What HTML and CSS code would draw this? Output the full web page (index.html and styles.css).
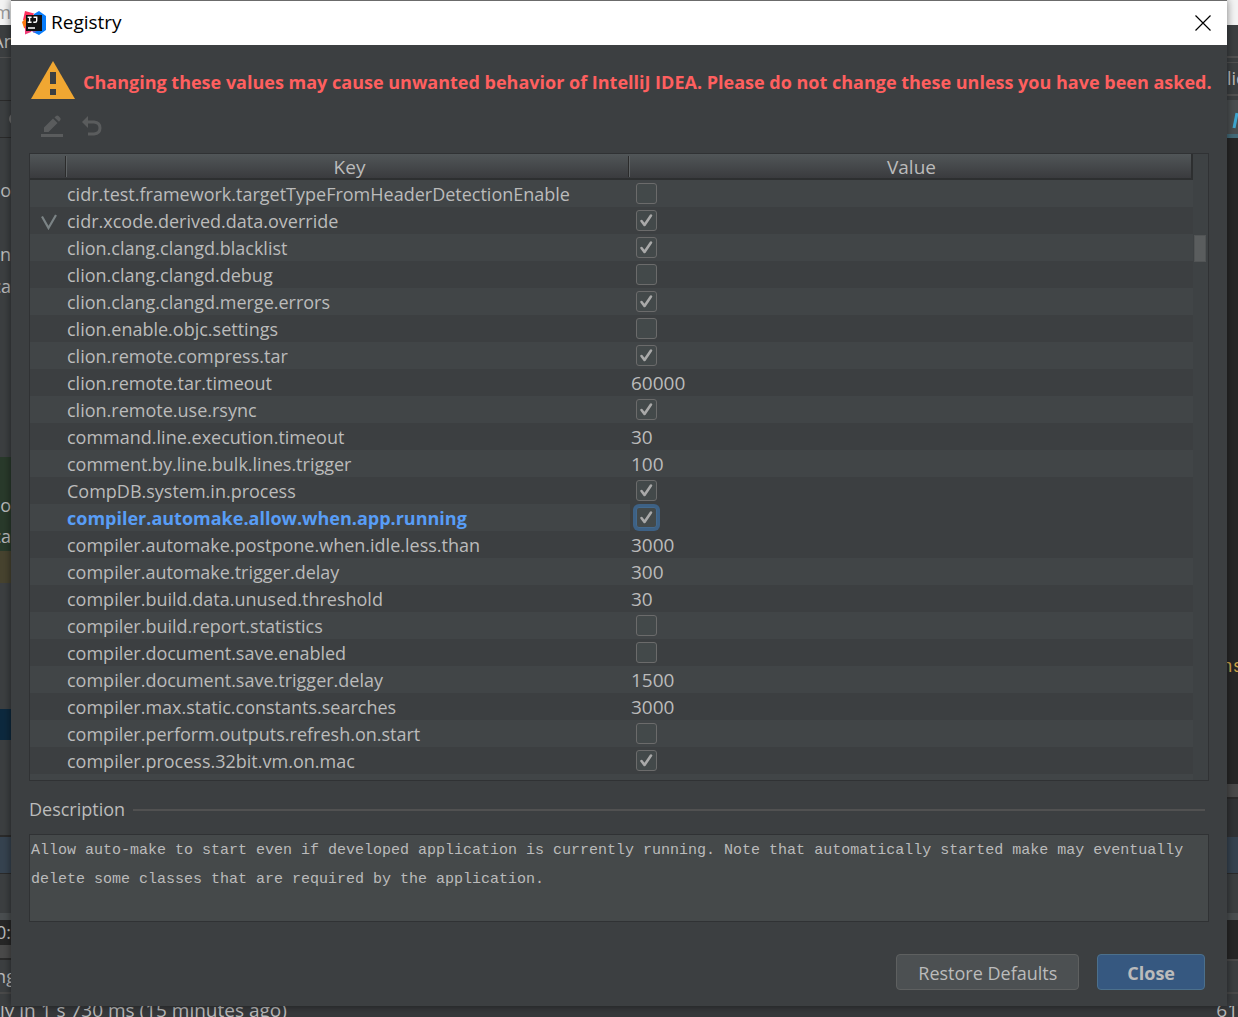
FILE: index.html
```html
<!DOCTYPE html>
<html lang="en">
<head>
<meta charset="utf-8">
<meta name="viewport" content="width=device-width, initial-scale=1">
<title>Registry</title>
<link rel="stylesheet" href="styles.css">
</head>
<body>
<div class="desktop">
  <div class="edge edge-left" aria-hidden="true">
    <div class="strip h25 paper">m</div>
    <div class="strip h32">Ar</div>
    <div class="strip h1 rule"></div>
    <div class="strip h42"></div>
    <div class="strip h1 dark"></div>
    <div class="strip h36 arc"><span class="ring"></span></div>
    <div class="strip h1 dark"></div>
    <div class="strip h36"></div>
    <div class="strip h32">o</div>
    <div class="strip h32"></div>
    <div class="strip h32">n</div>
    <div class="strip h32">ca</div>
    <div class="strip h155"></div>
    <div class="strip h32 added"></div>
    <div class="strip h32 added">o</div>
    <div class="strip h30 added">ca</div>
    <div class="strip h32 ignored"></div>
    <div class="strip h126"></div>
    <div class="strip h31 selected"></div>
    <div class="strip h95"></div>
    <div class="strip h2 dark"></div>
    <div class="strip h36 tab"></div>
    <div class="strip h1 dark"></div>
    <div class="strip h39"></div>
    <div class="strip h7 bar"></div>
    <div class="strip h25 editor">0:</div>
    <div class="strip h13 bar-gray"></div>
    <div class="strip h2 dark"></div>
    <div class="strip grow middle">ng</div>
    <div class="strip h2 bar-gray"></div>
    <div class="strip h12"></div>
  </div>

  <main class="dialog" role="dialog" aria-labelledby="dialog-title">
    <header class="titlebar">
      <svg class="logo" viewBox="0 0 24 24" aria-hidden="true">
        <path fill="#fe315d" d="M3 0l9 2.500L8 12 1 9z"/>
        <path fill="#ff7a12" d="M0 11l4-4 2 12-4-2z"/>
        <path fill="#087cfa" d="M12 3l5-3 7 5v14l-7 5-6-3z"/>
        <path fill="#f03c78" d="M3 15h10l-4 6-6 2.500z"/>
        <path fill="#7b61c8" d="M9 19h7l-4 3z"/>
        <rect x="4" y="4" width="16" height="16" fill="#111"/>
        <path fill="none" stroke="#fff" stroke-width="1.400" d="M5.600 6.200h4M7.600 6.200v5M5.600 11.200h4M11.500 6.200h3.200v3.600q0 1.500-1.600 1.500h-1.800M6 17h7"/>
      </svg>
      <h1 class="title" id="dialog-title">Registry</h1>
      <button class="close-x" type="button" aria-label="Close window">
        <svg viewBox="0 0 16 16" width="16" height="16"><path d="M.5.500l15 15M15.500.500l-15 15" stroke="#000" stroke-width="1.200" fill="none"/></svg>
      </button>
    </header>

    <div class="content">
      <div class="warning">
        <svg viewBox="0 0 44 38" width="44" height="38" aria-hidden="true"><path fill="#f0a732" d="M22 0l22 38H0z"/><path fill="#3c3f41" d="M19 11h6v12h-6zM19 28h6v6h-6z"/></svg>
        <strong class="warning-text">Changing these values may cause unwanted behavior of IntelliJ IDEA. Please do not change these unless you have been asked.</strong>
      </div>

      <div class="toolbar">
        <button class="tool" type="button" disabled aria-label="Edit">
          <svg viewBox="0 0 24 24" width="24" height="24"><path fill="#5a5c5d" d="M1 20h22v3H1zM4 18v-4.500l9-9 4.500 4.500-9 9zM14.500 3.500L16 2q1.300-1 2.500 0l1.700 1.700q1 1.200 0 2.500L19 7.800z"/></svg>
        </button>
        <button class="tool" type="button" disabled aria-label="Revert">
          <svg viewBox="0 0 24 24" width="24" height="24"><path fill="#5a5c5d" d="M2 8l6-6v12z"/><path fill="none" stroke="#5a5c5d" stroke-width="3" d="M6 8h8q6 .5 6 6t-6 6H8"/></svg>
        </button>
      </div>

      <div class="table-pane">
        <table class="registry">
          <colgroup><col class="col-mark"><col><col></colgroup>
          <thead>
            <tr><th aria-label="Changed"></th><th>Key</th><th>Value</th></tr>
          </thead>
          <tbody>
            <tr><td></td><td>cidr.test.framework.targetTypeFromHeaderDetectionEnable</td><td><input type="checkbox" aria-label="cidr.test.framework.targetTypeFromHeaderDetectionEnable"></td></tr>
            <tr><td class="mark"><svg viewBox="0 0 16 16" width="16" height="16" aria-hidden="true"><path fill="none" stroke="#7b8385" stroke-width="2.200" d="M1 2.500l6.500 11.500Q11 8 15 1"/></svg></td><td>cidr.xcode.derived.data.override</td><td><input type="checkbox" checked aria-label="cidr.xcode.derived.data.override"></td></tr>
            <tr><td></td><td>clion.clang.clangd.blacklist</td><td><input type="checkbox" checked aria-label="clion.clang.clangd.blacklist"></td></tr>
            <tr><td></td><td>clion.clang.clangd.debug</td><td><input type="checkbox" aria-label="clion.clang.clangd.debug"></td></tr>
            <tr><td></td><td>clion.clang.clangd.merge.errors</td><td><input type="checkbox" checked aria-label="clion.clang.clangd.merge.errors"></td></tr>
            <tr><td></td><td>clion.enable.objc.settings</td><td><input type="checkbox" aria-label="clion.enable.objc.settings"></td></tr>
            <tr><td></td><td>clion.remote.compress.tar</td><td><input type="checkbox" checked aria-label="clion.remote.compress.tar"></td></tr>
            <tr><td></td><td>clion.remote.tar.timeout</td><td>60000</td></tr>
            <tr><td></td><td>clion.remote.use.rsync</td><td><input type="checkbox" checked aria-label="clion.remote.use.rsync"></td></tr>
            <tr><td></td><td>command.line.execution.timeout</td><td>30</td></tr>
            <tr><td></td><td>comment.by.line.bulk.lines.trigger</td><td>100</td></tr>
            <tr><td></td><td>CompDB.system.in.process</td><td><input type="checkbox" checked aria-label="CompDB.system.in.process"></td></tr>
            <tr class="current"><td></td><td>compiler.automake.allow.when.app.running</td><td><input type="checkbox" checked aria-label="compiler.automake.allow.when.app.running"></td></tr>
            <tr><td></td><td>compiler.automake.postpone.when.idle.less.than</td><td>3000</td></tr>
            <tr><td></td><td>compiler.automake.trigger.delay</td><td>300</td></tr>
            <tr><td></td><td>compiler.build.data.unused.threshold</td><td>30</td></tr>
            <tr><td></td><td>compiler.build.report.statistics</td><td><input type="checkbox" aria-label="compiler.build.report.statistics"></td></tr>
            <tr><td></td><td>compiler.document.save.enabled</td><td><input type="checkbox" aria-label="compiler.document.save.enabled"></td></tr>
            <tr><td></td><td>compiler.document.save.trigger.delay</td><td>1500</td></tr>
            <tr><td></td><td>compiler.max.static.constants.searches</td><td>3000</td></tr>
            <tr><td></td><td>compiler.perform.outputs.refresh.on.start</td><td><input type="checkbox" aria-label="compiler.perform.outputs.refresh.on.start"></td></tr>
            <tr><td></td><td>compiler.process.32bit.vm.on.mac</td><td><input type="checkbox" checked aria-label="compiler.process.32bit.vm.on.mac"></td></tr>
          </tbody>
        </table>
        <div class="scrollbar"><div class="thumb"></div></div>
      </div>

      <div class="separator"><label for="description">Description</label><span class="line"></span></div>
      <textarea class="description" id="description" readonly>Allow auto-make to start even if developed application is currently running. Note that automatically started make may eventually delete some classes that are required by the application.</textarea>

      <footer class="actions">
        <button class="btn" type="button">Restore Defaults</button>
        <button class="btn btn-primary" type="button">Close</button>
      </footer>
    </div>
  </main>

  <div class="edge edge-right" aria-hidden="true">
    <div class="strip h25 paper"></div>
    <div class="strip h31"></div>
    <div class="strip h2 rule"></div>
    <div class="strip h4"></div>
    <div class="strip h1 rule"></div>
    <div class="strip h31">lic</div>
    <div class="strip h2 rule"></div>
    <div class="strip h4"></div>
    <div class="strip h34 bar"><svg viewBox="0 0 11 34" width="11" height="34"><path d="M10 13L7 28" stroke="#3fa6cf" stroke-width="3"/></svg></div>
    <div class="strip h4 underline"></div>
    <div class="strip h513 editor"></div>
    <div class="strip h32 editor code">ns</div>
    <div class="strip grow editor"></div>
    <div class="strip h13 bar-gray"></div>
    <div class="strip h2 dark"></div>
    <div class="strip h38 panel"></div>
    <div class="strip h36 tab"></div>
    <div class="strip h1 dark"></div>
    <div class="strip h39"></div>
    <div class="strip h7 bar"></div>
    <div class="strip h39 editor"></div>
    <div class="strip h2 bar-gray"></div>
    <div class="strip h31"></div>
    <div class="strip h2 bar-gray"></div>
    <div class="strip h12"></div>
  </div>

  <div class="status"><span>ly in 1 s 730 ms (15 minutes ago)</span><span>61</span></div>
</div>
</body>
</html>
```
FILE: styles.css
```css
* {
  box-sizing: border-box;
}

body {
  margin: 0;
  background: #3c3f41;
  color: #bbbbbb;
  font: 19px/27px "Open Sans", "Noto Sans", sans-serif;
}

button {
  margin: 0;
  padding: 0;
  border: 0;
  background: none;
  color: inherit;
  font: inherit;
}

svg {
  display: block;
  flex: none;
}

.desktop {
  display: grid;
  grid-template-columns: 11px minmax(0, 1fr) 11px;
  grid-template-rows: 1fr 11px;
  min-height: 100vh;
}

/* Slices of the IDE window that show on both sides of the dialog */
.edge {
  display: flex;
  flex-direction: column;
  min-width: 0;
}

.strip {
  display: flex;
  flex: none;
  align-items: center;
  overflow: hidden;
  font-size: 18px;
  white-space: nowrap;
}

.edge-left .strip { justify-content: flex-end; }
.edge .middle,
.edge .code { justify-content: center; }
.strip.grow { flex: 1; }
.h1 { height: 1px; }
.h2 { height: 2px; }
.h4 { height: 4px; }
.h7 { height: 7px; }
.h12 { height: 12px; }
.h13 { height: 13px; }
.h25 { height: 25px; }
.h30 { height: 30px; }
.h31 { height: 31px; }
.h32 { height: 32px; }
.h34 { height: 34px; }
.h36 { height: 36px; }
.h38 { height: 38px; }
.h39 { height: 39px; }
.h42 { height: 42px; }
.h95 { height: 95px; }
.h126 { height: 126px; }
.h155 { height: 155px; }
.h513 { height: 513px; }

.paper { background: #f4f4f4; color: #999999; }
.rule { background: #515151; }
.dark { background: #2b2b2b; }
.added { background: #293a2b; }
.ignored { background: #47432f; }
.selected { background: #0d293e; }
.tab { background: #364350; }
.bar { background: #4a4e50; }
.bar-gray { background: #4a4a4a; }
.panel { background: #313335; }
.editor { background: #272727; }
.underline { background: #436a78; }
.strip.code { color: #cfa54a; font-family: "Liberation Mono", monospace; }

.ring {
  flex: none;
  width: 12px;
  height: 12px;
  margin-right: -10px;
  border: 2px solid #6e6e6e;
  border-radius: 50%;
}

.status {
  display: flex;
  grid-column: 1 / -1;
  align-items: center;
  justify-content: space-between;
  overflow: hidden;
  padding-bottom: 4px;
  background: #37393b;
  font-size: 19px;
  line-height: 20px;
  white-space: nowrap;
}

/* Dialog */
.dialog {
  display: flex;
  flex-direction: column;
  z-index: 1;
  min-width: 0;
  border-top: 1px solid #6b6b6b;
  background: #3c3f41;
  box-shadow: 0 0 8px rgba(0, 0, 0, 0.5);
}

.titlebar {
  display: flex;
  align-items: center;
  height: 44px;
  padding: 0 16px 1px 11px;
  background: #ffffff;
  color: #000000;
}

.logo {
  width: 24px;
  height: 24px;
}

.title {
  flex: 1;
  margin: 0 0 0 5px;
  font-size: 19px;
  font-weight: 400;
}

.content {
  display: flex;
  flex: 1;
  flex-direction: column;
  padding: 16px 18px;
}

.warning {
  display: flex;
  align-items: center;
  gap: 8px;
  padding-left: 2px;
}

.warning-text {
  padding-top: 4px;
  color: #ff5f5f;
  font-size: 18px;
  white-space: nowrap;
}

.toolbar {
  display: flex;
  gap: 16px;
  padding: 15px 11px;
}

.table-pane {
  display: flex;
  flex: 1;
  align-items: flex-start;
  border: 1px solid #303234;
  background: #414547;
}

.registry {
  flex: 1;
  width: 100%;
  min-width: 0;
  table-layout: fixed;
  border-collapse: separate;
  border-spacing: 0;
}

.col-mark { width: 37px; }

.registry th {
  height: 26px;
  padding: 2px 0 0 2px;
  border-bottom: 2px solid #2d2f30;
  background: linear-gradient(90deg, #2b2b2b 1px, #5f6365 1px) right top 2px / 2px 21px no-repeat, linear-gradient(#515658, #3a3b3e);
  font-size: 19px;
  font-weight: 400;
  line-height: 22px;
}

.registry th:last-child {
  border-right: 2px solid #2d2f30;
  background: linear-gradient(#515658, #3a3b3e);
}

.registry td {
  height: 27px;
  padding: 2px 0 0;
  font-size: 18px;
  line-height: 25px;
  white-space: nowrap;
}

.registry td:last-child {
  padding-left: 1px;
  font-size: 19px;
}

.registry tbody tr { background: #3c3f41; }
.registry tbody tr:nth-child(odd) { background: #414547; }
.registry .mark { padding-left: 11px; }

.registry .current {
  color: #589df6;
  font-weight: 700;
}

.registry .current td:last-child { background: #3c3f41; }

input[type="checkbox"] {
  display: block;
  width: 21px;
  height: 21px;
  margin: 0 5px 3px;
  border: 1px solid #6b6b6b;
  border-radius: 3px;
  appearance: none;
  background: #43494a;
}

input[type="checkbox"]:checked {
  background: #43494a url("data:image/svg+xml,%3Csvg xmlns='http://www.w3.org/2000/svg' viewBox='0 0 19 19'%3E%3Cpath fill='none' stroke='%23a9a9a9' stroke-width='2.6' stroke-linecap='round' stroke-linejoin='round' d='M4.500 10L7.500 14 14 4.500'/%3E%3C/svg%3E") center / 19px 19px no-repeat;
}

.current input[type="checkbox"] {
  border-color: #43698e;
  box-shadow: 0 0 0 3px #3d6185;
}

.scrollbar {
  display: flex;
  flex: none;
  align-self: stretch;
  width: 15px;
  padding: 81px 2px 0 1px;
  background: #3e4244;
}

.thumb {
  flex: 1;
  height: 27px;
  border: 1px solid #515455;
  background: #5a5d5e;
}

.separator {
  display: flex;
  align-items: center;
  gap: 8px;
  margin: 15px 4px 11px 0;
  font-size: 18px;
}

.line {
  flex: 1;
  height: 2px;
  background: #515151;
}

.description {
  height: 88px;
  padding: 1px;
  border: 1px solid #303234;
  border-radius: 0;
  outline: 0;
  background: #45494a;
  color: #bbbbbb;
  font: 15px/29px "Liberation Mono", monospace;
  resize: none;
}

.actions {
  display: flex;
  justify-content: flex-end;
  gap: 18px;
  padding: 32px 4px 0 0;
}

.btn {
  height: 36px;
  padding: 2px 21px 0;
  border: 1px solid #5e6060;
  border-radius: 4px;
  background: #4c5052;
  font-size: 18px;
}

.btn-primary {
  padding: 2px 29px 0;
  border-color: #4c708c;
  background: #365880;
  font-weight: 700;
}
```
